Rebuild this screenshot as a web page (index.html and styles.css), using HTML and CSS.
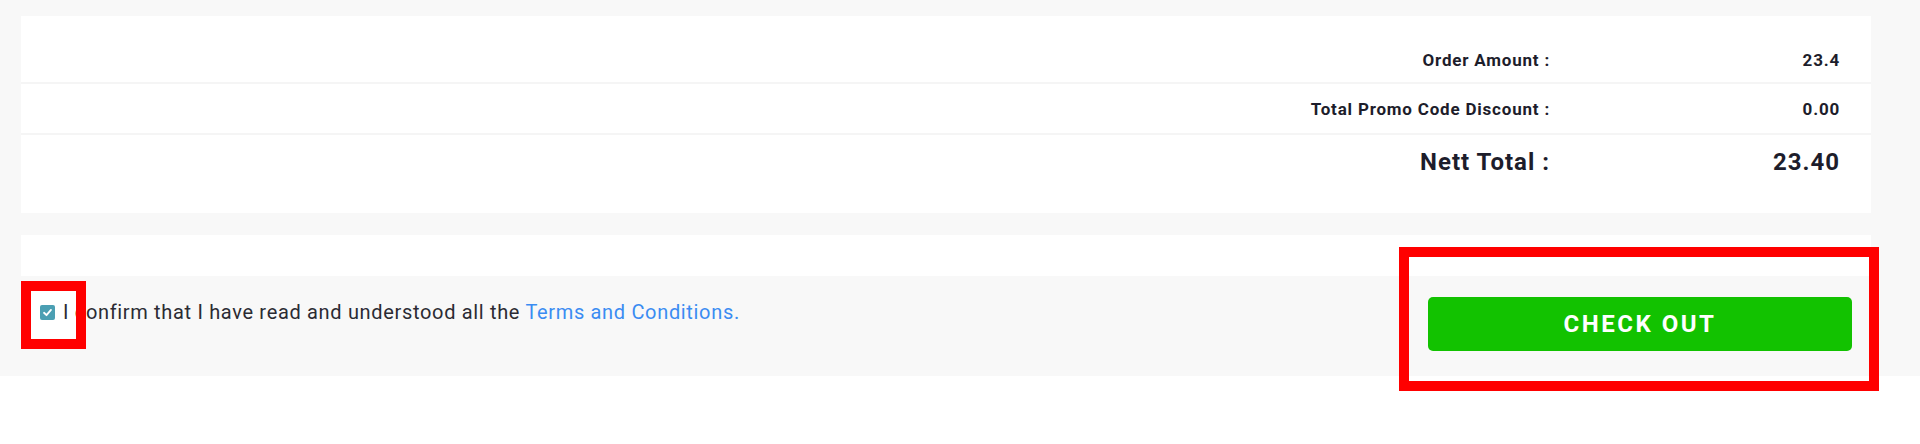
FILE: index.html
```html
<!DOCTYPE html>
<html lang="en">
<head>
    <meta charset="UTF-8">
    <meta name="viewport" content="width=device-width, initial-scale=1.0">
    <title>Checkout</title>
    <link rel="stylesheet" href="styles.css">
</head>
<body>
    <div class="stage">
        <!-- white fill behind the highlighted checkbox -->
        <div class="mark-fill mark-terms"></div>

        <div class="checkout-page">
            <div class="summary-card">
                <div class="summary-row first">
                    <div class="summary-label">Order Amount :</div>
                    <div class="summary-value">23.4</div>
                </div>
                <div class="summary-row second">
                    <div class="summary-label">Total Promo Code Discount :</div>
                    <div class="summary-value">0.00</div>
                </div>
                <div class="summary-row total">
                    <div class="summary-label">Nett Total :</div>
                    <div class="summary-value">23.40</div>
                </div>
            </div>

            <div class="blank-strip"></div>

            <div class="confirm-row">
                <label class="terms">
                    <span class="terms-box">
                        <svg width="11" height="11" viewBox="0 0 12 12">
                            <path d="M2.2 6.3 L4.9 8.9 L9.8 3.2" fill="none" stroke="#ffffff" stroke-width="2" stroke-linecap="round" stroke-linejoin="round"/>
                        </svg>
                    </span>
                    <span class="terms-text">I confirm that I have read and understood all the <a href="#" class="terms-link">Terms and Conditions.</a></span>
                </label>
                <button class="checkout-button">CHECK OUT</button>
            </div>
        </div>

        <!-- red highlight frames on top -->
        <div class="mark-frame mark-terms"></div>
        <div class="mark-frame mark-button"></div>
    </div>
</body>
</html>
```

FILE: styles.css
```css
body {
    margin: 0;
    background-color: #ffffff;
    font-family: Roboto, "Liberation Sans", Arial, sans-serif;
    color: #1d1d2b;
}

.stage {
    position: relative;
    height: 444px;
}

.checkout-page {
    background-color: #f8f8f8;
    padding: 16px 49px 0 21px;
    height: 360px;
}

.summary-card {
    position: relative;
    background-color: #ffffff;
}

.summary-row {
    display: flex;
    justify-content: flex-end;
    align-items: center;
    padding-right: 31px;
    border-bottom: 2px solid #f5f5f5;
    box-sizing: border-box;
    font-size: 17px;
    font-weight: 700;
    letter-spacing: 0.8px;
}

.summary-row.first {
    height: 68px;
    padding-top: 22px;
}

.summary-row.second {
    height: 51px;
}

.summary-row.total {
    height: 78px;
    align-items: flex-start;
    padding-top: 13px;
    border-bottom: none;
    font-size: 24px;
    letter-spacing: 1px;
}

.summary-label {
    text-align: right;
}

.summary-value {
    width: 290px;
    text-align: right;
}

.blank-strip {
    position: relative;
    background-color: #ffffff;
    height: 41px;
    margin-top: 22px;
}

.confirm-row {
    position: relative;
    display: flex;
    justify-content: space-between;
    align-items: flex-start;
    padding: 21px 19px 0 19px;
}

.terms {
    display: flex;
    align-items: center;
    gap: 8px;
    margin-top: 3px;
    font-size: 20px;
    letter-spacing: 0.67px;
    color: #2b2b33;
}

.terms-box {
    flex-shrink: 0;
    width: 15px;
    height: 15px;
    border-radius: 2px;
    background-color: #4b9fb3;
    display: flex;
    align-items: center;
    justify-content: center;
}

.terms-link {
    color: #3b8cf2;
    text-decoration: none;
}

.checkout-button {
    width: 424px;
    height: 54px;
    border: none;
    border-radius: 5px;
    background-color: #12c200;
    color: #ffffff;
    font-family: Roboto, "Liberation Sans", Arial, sans-serif;
    font-size: 24px;
    font-weight: 700;
    letter-spacing: 2.5px;
    cursor: pointer;
}

.mark-fill {
    position: absolute;
    background-color: #ffffff;
}

.mark-frame {
    position: absolute;
    border: 10px solid #ff0000;
    box-sizing: border-box;
}

.mark-terms {
    left: 21px;
    top: 281px;
    width: 65px;
    height: 68px;
}

.mark-button {
    left: 1399px;
    top: 247px;
    width: 480px;
    height: 144px;
}
```
